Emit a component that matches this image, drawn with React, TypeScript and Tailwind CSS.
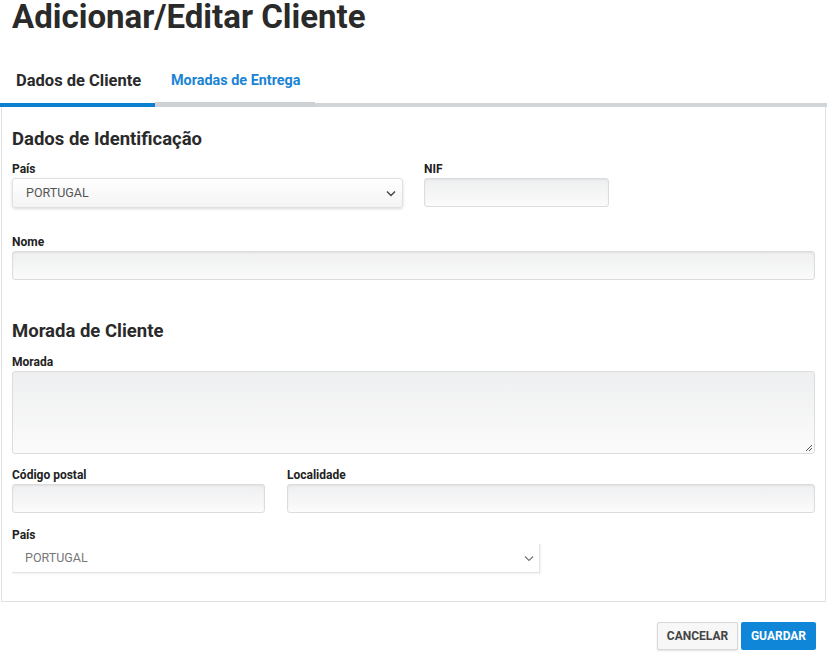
import React from "react";

const Label = ({ children }: { children: React.ReactNode }) => (
  <div className="text-[12px] font-bold text-[#222] leading-[14px] mb-[2px]">{children}</div>
);

const Input = ({ className = "" }: { className?: string }) => (
  <div
    className={`h-[29px] rounded-[3px] border border-[#dcdcdc] bg-gradient-to-b from-[#eeeff0] to-[#fbfbfb] shadow-[inset_0_1px_2px_rgba(0,0,0,0.06)] ${className}`}
  />
);

export default function App() {
  return (
    <div className="w-[827px] h-[659px] bg-white overflow-hidden" style={{ fontFamily: "Roboto, 'Liberation Sans', sans-serif" }}>
      <h1 className="text-[33px] font-bold text-[#2a2a2a] leading-[33px] pl-[12px]">Adicionar/Editar Cliente</h1>
      <div className="mt-[38px] flex items-end border-b-[4px] border-[#d2d5d8]">
        <div className="w-[155px] pl-[16px] pb-[12px] border-b-[4px] border-[#0b7fd0] -mb-[4px] text-[16.5px] font-bold text-[#2a2a2a] leading-[20px]">Dados de Cliente</div>
        <div className="w-[160px] pl-[16px] pb-[11px] border-b-[5px] border-[#cfd2d5] -mb-[4px] text-[14.4px] font-bold text-[#1a84d3] leading-[20px]">Moradas de Entrega</div>
      </div>
      <div className="mx-[1px] border border-t-0 border-[#e2e2e2] px-[10px] pb-[28px] bg-white">
        <h2 className="pt-[21px] text-[18.5px] font-bold text-[#2a2a2a] leading-[22px]">Dados de Identificação</h2>
        <div className="mt-[12px] flex gap-[21px]">
          <div className="w-[391px]">
            <Label>País</Label>
            <div className="h-[30px] rounded-[3px] border border-[#e0e0e0] bg-gradient-to-b from-white to-[#f4f4f4] shadow-[0_1px_3px_rgba(0,0,0,0.15)] flex items-center justify-between pl-[13px] pr-[6px]">
              <span className="text-[12.5px] text-[#555]">PORTUGAL</span>
              <svg width="10" height="7" viewBox="0 0 10 7" fill="none">
                <path d="M1 1.5 L5 5.5 L9 1.5" stroke="#444" strokeWidth="1.4" />
              </svg>
            </div>
          </div>
          <div className="w-[185px]">
            <Label>NIF</Label>
            <Input />
          </div>
        </div>
        <div className="mt-[27px]">
          <Label>Nome</Label>
          <Input />
        </div>
        <h2 className="mt-[40px] text-[18.5px] font-bold text-[#2a2a2a] leading-[22px]">Morada de Cliente</h2>
        <div className="mt-[13px]">
          <Label>Morada</Label>
          <div className="relative h-[83px] rounded-[3px] border border-[#dcdcdc] bg-gradient-to-b from-[#eeeff0] to-[#fbfbfb]">
            <svg className="absolute right-[1px] bottom-[1px]" width="9" height="9" viewBox="0 0 9 9">
              <path d="M8 2 L2 8 M8 5 L5 8" stroke="#555" strokeWidth="1" />
            </svg>
          </div>
        </div>
        <div className="mt-[14px] flex gap-[22px]">
          <div className="w-[253px]">
            <Label>Código postal</Label>
            <Input />
          </div>
          <div className="flex-1">
            <Label>Localidade</Label>
            <Input />
          </div>
        </div>
        <div className="mt-[15px] w-[528px]">
          <Label>País</Label>
          <div className="h-[29px] border-b border-r border-[#e4e4e4] shadow-[1px_1px_2px_rgba(0,0,0,0.06)] flex items-center justify-between pl-[13px] pr-[5px]">
            <span className="text-[12.5px] text-[#777]">PORTUGAL</span>
            <svg width="10" height="7" viewBox="0 0 10 7" fill="none">
              <path d="M1 1.5 L5 5.5 L9 1.5" stroke="#777" strokeWidth="1.2" />
            </svg>
          </div>
        </div>
      </div>
      <div className="mt-[20px] flex justify-end gap-[3px] pr-[11px]">
        <button className="h-[28px] w-[81px] rounded-[2px] border border-[#d8d8d8] bg-[#f7f7f7] shadow-[0_1px_2px_rgba(0,0,0,0.12)] text-[12px] font-bold text-[#444]">CANCELAR</button>
        <button className="h-[28px] w-[75px] rounded-[2px] bg-[#0f86d8] text-[12px] font-bold text-white">GUARDAR</button>
      </div>
    </div>
  );
}
